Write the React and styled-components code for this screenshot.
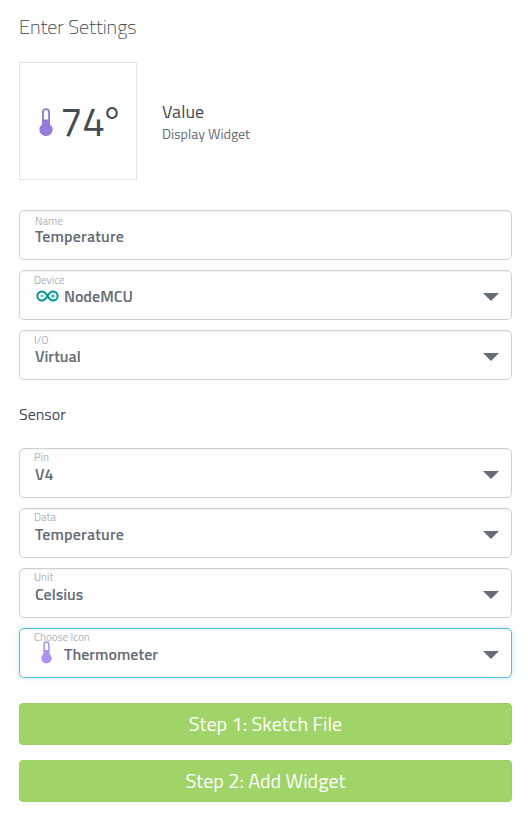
import React from 'react';
import styled, { createGlobalStyle, css } from 'styled-components';

const GlobalStyle = createGlobalStyle`
  * { box-sizing: border-box; }
  body {
    margin: 0;
    background: #fff;
    font-family: "Titillium Web", Roboto, "Open Sans", sans-serif;
    color: #434a54;
  }
`;

const Panel = styled.main`
  width: 528px;
  height: 814px;
  padding: 15px 16px 0 19px;
  display: flex;
  flex-direction: column;
  white-space: nowrap;
`;

const Title = styled.h1`
  margin: 0 0 23px;
  height: 24px;
  font-size: 20px;
  font-weight: 200;
  line-height: 24px;
  -webkit-text-stroke: 0.15px currentColor;
`;

const WidgetSummary = styled.section`
  display: flex;
  align-items: center;
  gap: 25px;
  height: 118px;
  margin-bottom: 30px;
`;

const Preview = styled.div`
  display: flex;
  align-items: center;
  width: 118px;
  height: 118px;
  padding: 2px 0 0 18.5px;
  border: 1px solid #e3e4e6;
`;

const Reading = styled.span`
  margin-left: 7.5px;
  padding-bottom: 1px;
  font-size: 40px;
  font-weight: 400;
  line-height: 44px;
`;

const Degree = styled.span`
  margin-left: -4px;
`;

const WidgetName = styled.div`
  margin-top: 2px;
  font-size: 18px;
  line-height: 24px;
  letter-spacing: 0.1px;
`;

const WidgetKind = styled.div`
  font-size: 14px;
  line-height: 20px;
  color: #656d78;
`;

const Fields = styled.div`
  display: flex;
  flex-direction: column;
  gap: 10px;
`;

const FieldBox = styled.div`
  display: flex;
  align-items: center;
  justify-content: space-between;
  height: 50px;
  padding: 0 12px 0 14px;
  border: 1px solid #ccd1d9;
  border-radius: 5px;
  box-shadow: inset 0 1px 1px rgba(0, 0, 0, 0.06);
  ${(p) => p.$active && css`
    border-color: #4fbfdc;
    box-shadow: inset 0 1px 1px rgba(0, 0, 0, 0.06), 0 0 5px rgba(79, 193, 233, 0.35);
  `}
`;

const FieldText = styled.div`
  height: 48px;
  padding: ${(p) => (p.$input ? '4px 0 0 1px' : '3px 0 0')};
`;

const Label = styled.div`
  height: ${(p) => (p.$input ? 12 : 13)}px;
  font-size: 11px;
  line-height: ${(p) => (p.$raised ? 11 : 13)}px;
  color: #aab2bd;
`;

const Value = styled.div`
  display: flex;
  align-items: center;
  height: 18px;
  padding-left: ${(p) => (p.$input ? 0 : 1)}px;
  font-size: 16px;
  font-weight: 600;
  line-height: 18px;
  color: #656d78;
  letter-spacing: ${(p) => p.$track || 0}px;
`;

const IconSlot = styled.span`
  display: flex;
  align-items: center;
  justify-content: center;
  width: ${(p) => (p.$tall ? 23 : 24)}px;
  height: 18px;
  margin-right: ${(p) => (p.$tall ? 6 : 5)}px;
  padding-bottom: ${(p) => (p.$tall ? 3 : 0)}px;
`;

const Caret = styled.span`
  width: 0;
  height: 0;
  margin-top: 4px;
  border: 8px solid transparent;
  border-top-color: #656d78;
  border-bottom: 0;
`;

const GroupTitle = styled.h2`
  margin: 23px 0;
  height: 22px;
  font-size: 16px;
  font-weight: 400;
  line-height: 22px;
`;

const Actions = styled.div`
  display: flex;
  flex-direction: column;
  gap: 15px;
  margin-top: 25px;
`;

const StepButton = styled.button`
  height: 42px;
  padding: 0 0 1px;
  border: 1px solid #98d062;
  border-radius: 4px;
  background: #a0d468;
  color: #fff;
  font: 400 20px/40px "Titillium Web", Roboto, "Open Sans", sans-serif;
`;

const Svg = styled.svg`
  flex: none;
`;

function Thermometer({ width, height, color }) {
  return (
    <Svg width={width} height={height} viewBox="0 0 14 29" preserveAspectRatio="none">
      <path
        fillRule="evenodd"
        fill={color}
        d="M3 4.2a4 4 0 0 1 8 0v12.2a6.6 6.6 0 1 1-8 0zM4.9 4.2v7.3h4.2V4.2a2.1 2.1 0 0 0-4.2 0z"
      />
    </Svg>
  );
}

function ArduinoLogo() {
  return (
    <Svg width="23" height="12" viewBox="0 0 23 12" fill="none" stroke="#00979c">
      <path
        strokeWidth="2"
        d="M11.5 6C9.8 3 8.3 1.4 6 1.4a4.6 4.6 0 0 0 0 9.2C8.3 10.6 9.8 9 11.5 6S14.7 1.4 17 1.4a4.6 4.6 0 0 1 0 9.2C14.7 10.6 13.2 9 11.5 6z"
      />
      <path strokeWidth="1.1" d="M4.2 6h3.6M15.2 6h3.6M17 4.2v3.6" />
    </Svg>
  );
}

function Field({ label, value, icon, tallIcon, input, active, raised, track }) {
  return (
    <FieldBox $active={active}>
      <FieldText $input={input}>
        <Label $input={input} $raised={raised}>{label}</Label>
        <Value $input={input} $track={track}>
          {icon && <IconSlot $tall={tallIcon}>{icon}</IconSlot>}
          {value}
        </Value>
      </FieldText>
      {!input && <Caret />}
    </FieldBox>
  );
}

export default function App() {
  return (
    <>
      <GlobalStyle />
      <Panel>
        <Title>Enter Settings</Title>
        <WidgetSummary>
          <Preview>
            <Thermometer width={14} height={29} color="#967adc" />
            <Reading>74<Degree>°</Degree></Reading>
          </Preview>
          <div>
            <WidgetName>Value</WidgetName>
            <WidgetKind>Display Widget</WidgetKind>
          </div>
        </WidgetSummary>
        <Fields>
          <Field label="Name" value="Temperature" track={0.13} input />
          <Field label="Device" value="NodeMCU" icon={<ArduinoLogo />} />
          <Field label="I/O" value="Virtual" />
        </Fields>
        <GroupTitle>Sensor</GroupTitle>
        <Fields>
          <Field label="Pin" value="V4" raised />
          <Field label="Data" value="Temperature" track={0.13} raised />
          <Field label="Unit" value="Celsius" raised />
          <Field
            label="Choose Icon"
            value="Thermometer"
            icon={<Thermometer width={11} height={23} color="#ac92ec" />}
            tallIcon
            active
            raised
          />
        </Fields>
        <Actions>
          <StepButton>Step 1: Sketch File</StepButton>
          <StepButton>Step 2: Add Widget</StepButton>
        </Actions>
      </Panel>
    </>
  );
}
